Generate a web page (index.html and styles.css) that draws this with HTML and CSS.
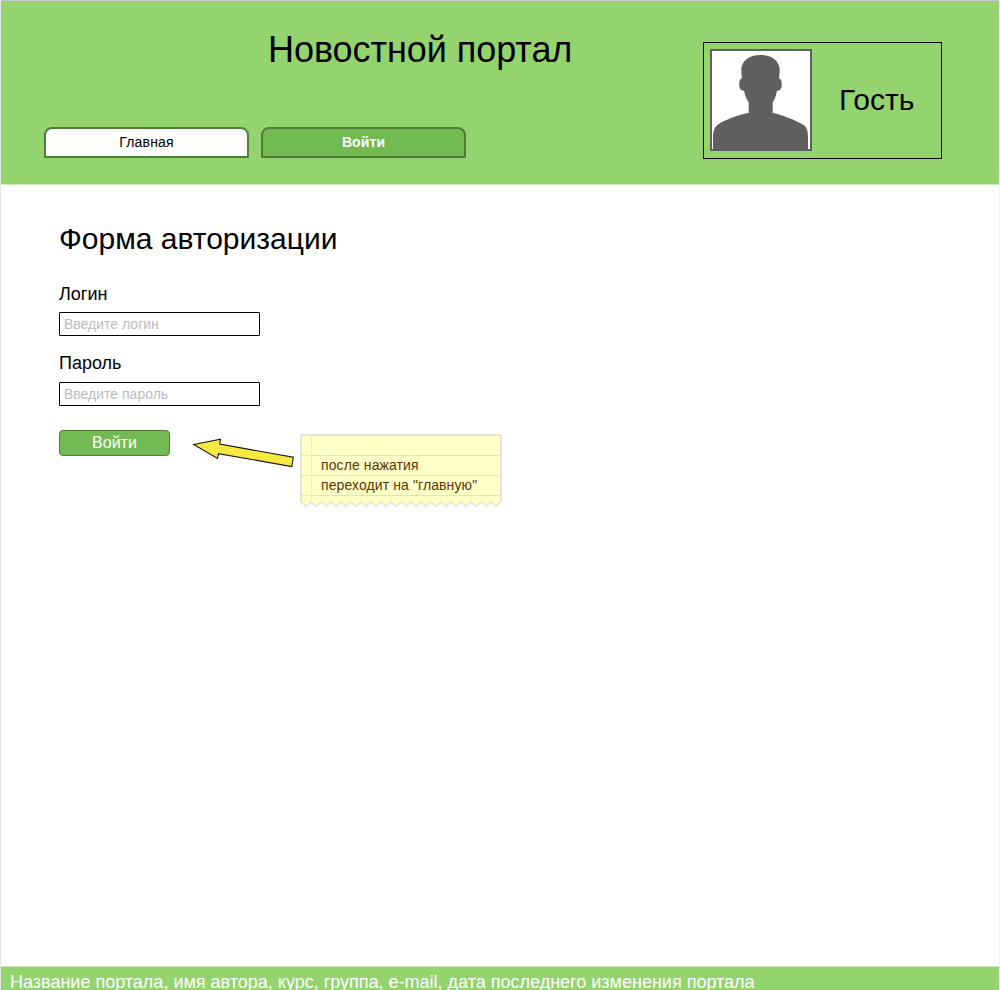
FILE: index.html
```
<!DOCTYPE html>
<html lang="ru">
<head>
<meta charset="utf-8">
<title>Новостной портал</title>
<link rel="stylesheet" href="styles.css">
</head>
<body>
<div class="page">
  <header class="header">
    <div class="header-main">
      <h1 class="title"><span>Новостной портал</span></h1>
      <nav class="tabs">
        <a class="tab"><span class="tab-text">Главная</span></a>
        <a class="tab tab-active"><span>Войти</span></a>
      </nav>
    </div>
    <div class="user">
      <svg class="avatar" width="102" height="102" viewBox="0 0 102 102">
        <rect x="1" y="1" width="100" height="100" fill="#fff" stroke="#606060" stroke-width="2"/>
        <path fill="#606060" d="M3 101V89C3 82 4 79 8 75.500C15 70.500 31 65 38.700 64V53.500C36.500 50 34.700 46 34.200 42C31 42 29.200 39 29.200 36C29.200 32 30 29.500 32 29.500C31.500 26 31.300 23 31.300 20C32 12 39 6 50.500 6C62 6 69 12 69.700 20C69.700 23 69.500 26 69 29.500C71 29.500 71.800 32 71.800 36C71.800 39 70 42 66.800 42C66.300 46 65 50 62.700 53.500V64C70 65 86 71.500 93 75.500C97 78.500 98 81 98 89V101Z"/>
      </svg>
      <span class="user-name">Гость</span>
    </div>
  </header>
  <main class="content">
    <form class="form">
      <h2 class="form-title"><span>Форма авторизации</span></h2>
      <label class="label" for="login"><span>Логин</span></label>
      <input class="input" id="login" type="text" placeholder="Введите логин">
      <label class="label label-password" for="password"><span>Пароль</span></label>
      <input class="input" id="password" type="password" placeholder="Введите пароль">
      <button class="submit" type="button"><span>Войти</span></button>
    </form>
    <svg class="arrow" width="104" height="32" viewBox="0 0 104 32">
      <path d="M2.700 8.500L29.500 3.300L28.800 8.100L102.300 21.300L100.800 30.600L27.500 17.600L26.500 22.500Z" fill="#f5e942" stroke="#151515" stroke-width="1.100"/>
    </svg>
    <aside class="note">
      <svg class="note-paper" width="202" height="74" viewBox="0 0 202 74">
        <path fill="#ffffc8" stroke="#cfcfc4" d="M1 1H201V68L196 72.500L191 68L186 72.500L181 68L176 72.500L171 68L166 72.500L161 68L156 72.500L151 68L146 72.500L141 68L136 72.500L131 68L126 72.500L121 68L116 72.500L111 68L106 72.500L101 68L96 72.500L91 68L86 72.500L81 68L76 72.500L71 68L66 72.500L61 68L56 72.500L51 68L46 72.500L41 68L36 72.500L31 68L26 72.500L21 68L16 72.500L11 68L6 72.500L1 68Z"/>
        <path fill="none" stroke="#e4e4b4" d="M2 21.500H200M2 41.500H200M2 61.500H200"/>
        <path fill="none" stroke="#ffe4b8" d="M11.500 2V67"/>
      </svg>
      <p class="note-text">после нажатия<br>переходит на "главную"</p>
    </aside>
  </main>
  <footer class="footer"><span>Название портала, имя автора, курс, группа, e-mail, дата последнего изменения портала</span></footer>
</div>
</body>
</html>
```
FILE: styles.css
```
* { box-sizing: border-box; }
body { margin: 0; background: #fff; font-family: "Liberation Sans", Arial, sans-serif; color: #000; }
.page { height: 990px; overflow: hidden; display: flex; flex-direction: column; border-top: 1px solid #ccc; border-left: 1px solid rgba(204, 204, 204, .5); border-right: 1px solid #f0f0f0; }
.header { height: 184px; flex: none; display: flex; align-items: flex-start; background: #93d46f; border-bottom: 1px solid #c9eab7; }
.header-main { width: 702px; padding-left: 43px; }
.title { margin: 0; padding: 27px 0 0 224px; height: 126px; font-size: 36px; line-height: 44px; font-weight: 400; letter-spacing: -.05px; white-space: nowrap; }
.tabs { display: flex; gap: 12px; }
.tab { width: 205px; height: 31px; border: 2px solid #4f7e37; border-radius: 8px 8px 0 0; background: #fff; font-size: 14px; line-height: 27px; text-align: center; }
.tab-text { letter-spacing: .2px; }
.tab-active { background: #72bb53; color: #fff; font-weight: 700; letter-spacing: .1px; }
.user { width: 239px; height: 117px; margin-top: 41px; padding: 0 0 2px 6px; border: 1px solid #000; display: flex; align-items: center; gap: 27px; }
.avatar { flex: none; }
.user-name { font-size: 30px; line-height: 36px; }
.content { flex: 1; display: flex; align-items: flex-start; padding-left: 58px; }
.form { width: 132px; flex: none; display: flex; flex-direction: column; align-items: flex-start; padding-top: 36px; }
.form-title { margin: 0 0 27px; font-size: 30px; line-height: 36px; font-weight: 400; white-space: nowrap; }
.label { font-size: 18px; line-height: 20px; margin-bottom: 8px; }
.label-password { margin: -1px 0 9px; }
.input { width: 201px; height: 24px; margin: 0 0 18px; padding: 0 4px; border: 1px solid #000; border-radius: 1px; background: #fff; font: 14px "Liberation Sans", Arial, sans-serif; }
.input::placeholder { color: #bbb; opacity: 1; }
.submit { width: 111px; height: 26px; margin-top: 6px; padding: 0; border: 1px solid #4f7e37; border-radius: 4px; background: #72bb53; color: #fff; font: 16px/24px "Liberation Sans", Arial, sans-serif; }
.arrow { flex: none; margin-top: 251px; }
.note { flex: none; display: grid; width: 202px; margin: 249px 0 0 5px; }
.note-paper, .note-text { grid-area: 1 / 1; }
.note-text { margin: 0; padding: 21px 0 0 21px; font-size: 14px; line-height: 20px; letter-spacing: .1px; color: #663300; white-space: nowrap; }
.footer { height: 24px; flex: none; padding-left: 9px; overflow: hidden; background: #93d46f; border-top: 1px solid #c9eab7; color: #fff; font-size: 18px; line-height: 30px; white-space: nowrap; }
```
